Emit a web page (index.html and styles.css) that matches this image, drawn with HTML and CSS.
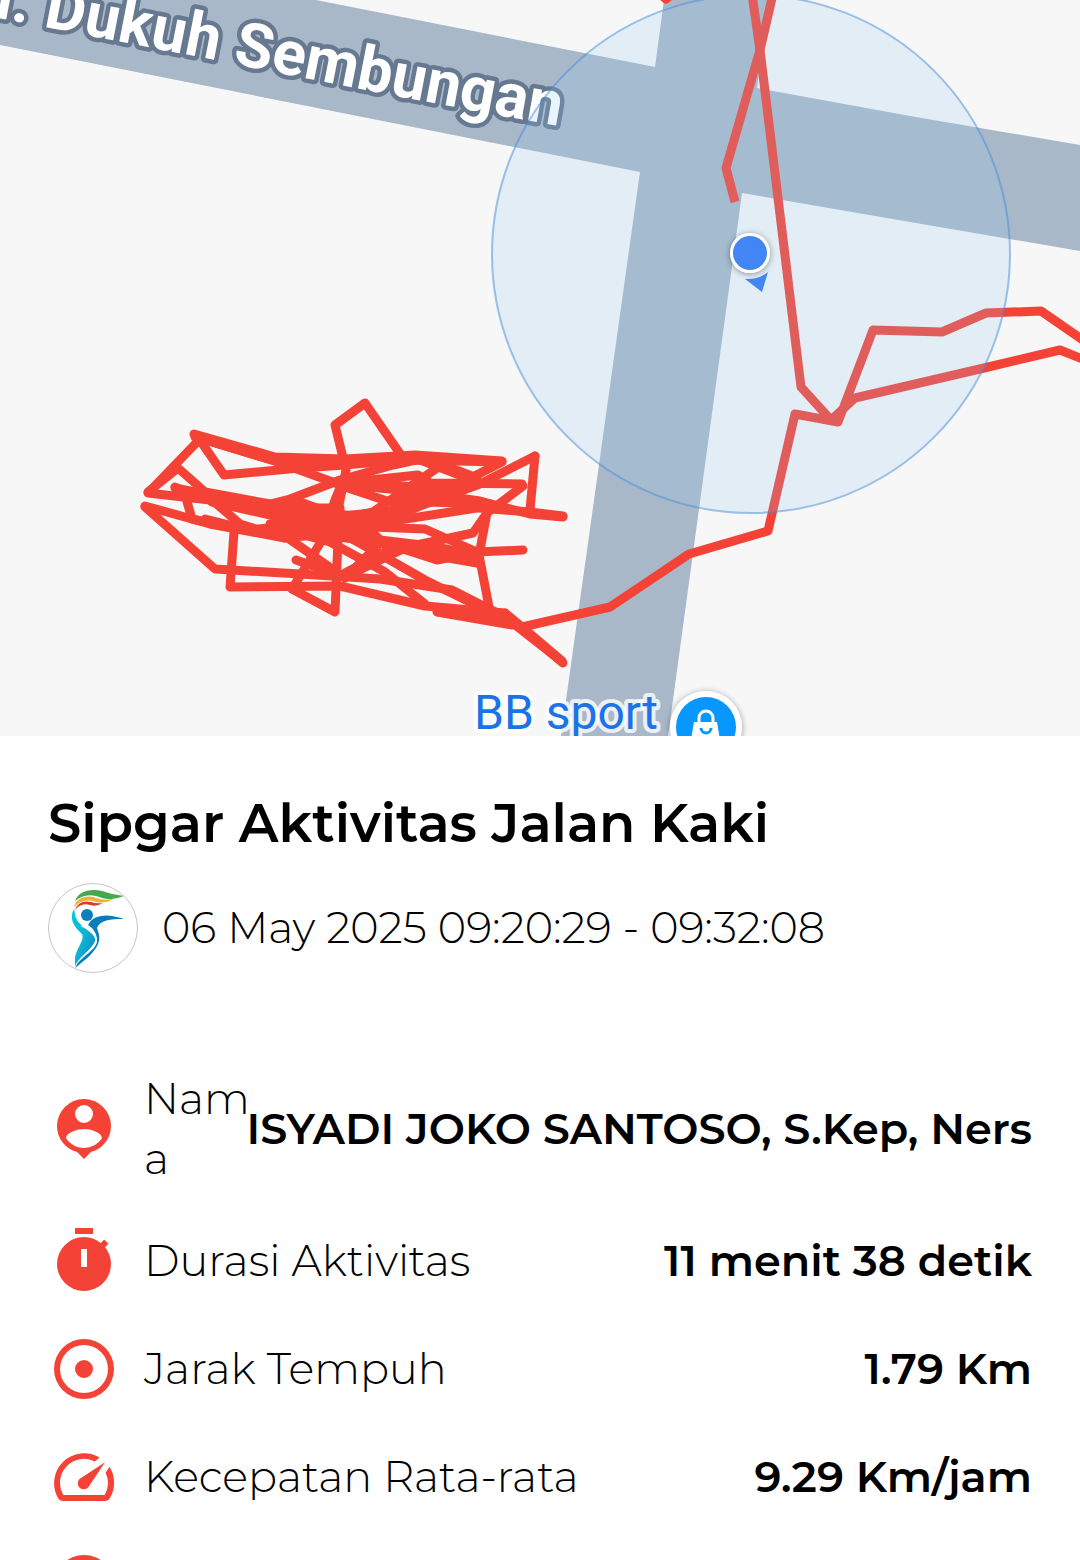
FILE: index.html
```html
<!DOCTYPE html>
<html lang="id">
<head>
<meta charset="utf-8">
<meta name="viewport" content="width=device-width, initial-scale=1">
<title>Sipgar Aktivitas Jalan Kaki</title>
<link rel="stylesheet" href="styles.css">
</head>
<body>
<main class="screen">
  <svg class="map" viewBox="0 0 1080 736" role="img" aria-label="Peta rute">
    <defs>
      <path id="street" d="M-80 3Q150 47 300 77T559 126"/>
      <filter id="soft" x="-50%" y="-50%" width="200%" height="200%"><feDropShadow dx="0" dy="1" stdDeviation="3" flood-color="#000" flood-opacity=".4"/></filter>
    </defs>
    <rect class="land" width="1080" height="736"/>
    <path class="road" d="M0-60L316 0L655 67L664 0H769L757 88L910 116L1080 145V251L910 222L742 193L673 700L668 736H561L566 700L640 172L0 45Z"/>
    <text class="street-name"><textPath href="#street" startOffset="100%" text-anchor="end">Jl. Dukuh Sembungan</textPath></text>
    <g class="route">
      <path d="M735 202L726 168L760 50L773-6"/>
      <path d="M752-6L760 50L801 387L831 420L855 398L984 368L1060 350L1090 362"/>
      <path d="M522 627L610 607L689 554L768 531L795 414L838 422L873 330L942 332L986 313L1041 311L1090 345"/>
      <path d="M660-6L666-1L672-6"/>
    </g>
    <g class="route laps">
      <path d="M194 434L275 457L345 459L415 455L502 461"/>
      <path d="M195 437L275 461L345 463L415 460L500 462"/>
      <path d="M197 436L224 475L300 468L345 465L410 459"/>
      <path d="M200 439L148 493L210 500L285 512L345 524"/>
      <path d="M148 492L178 468L205 492L270 504L340 518"/>
      <path d="M145 507L215 569L300 574L380 579L452 590L505 617L561 661"/>
      <path d="M145 506L210 524L285 538L345 526L373 524L483 507"/>
      <path d="M175 487L184 491L192 519L240 529L285 534"/>
      <path d="M175 488L285 510L345 526L425 529L477 552"/>
      <path d="M212 500L240 524L285 538L320 534L360 540"/>
      <path d="M234 532L230 587L340 586L425 606L505 613L522 627L562 661"/>
      <path d="M292 589L335 612L338 540L338 510L346 470L335 425L365 403L403 458"/>
      <path d="M296 560L345 577L407 547L473 533L487 513L523 486"/>
      <path d="M292 589L322 540L335 500L342 483L418 475L430 483L522 484"/>
      <path d="M200 438L275 461L338 484L410 491L480 501L530 514L563 517"/>
      <path d="M535 456L530 510"/>
      <path d="M535 456L480 484L420 506L373 526"/>
      <path d="M502 462L455 486L405 508L360 528L285 518"/>
      <path d="M443 464L373 512L345 518L300 502L262 509"/>
      <path d="M262 506L290 499L340 480L393 465L425 458L477 478L430 498"/>
      <path d="M430 498L480 508L530 512L563 516"/>
      <path d="M415 458L470 479L450 490L380 484L342 486"/>
      <path d="M487 513L479 555L490 612"/>
      <path d="M285 536L345 578L378 545L340 516"/>
      <path d="M285 512L330 524L300 530L270 524L340 534"/>
      <path d="M285 530L330 542L385 572L425 604"/>
      <path d="M345 535L390 560L425 580L490 612"/>
      <path d="M345 532L400 548L437 560L477 552L523 550"/>
      <path d="M400 546L437 556L477 563"/>
      <path d="M342 486L390 502L430 496L480 505"/>
      <path d="M340 516L385 512L430 502L480 504"/>
      <path d="M355 528L380 540L430 546L477 555"/>
      <path d="M360 520L385 545L430 553L475 554"/>
      <path d="M345 573L385 552L420 545"/>
      <path d="M285 508L340 508L340 530"/>
      <path d="M200 497L285 507L345 515L380 520"/>
      <path d="M212 502L275 516L345 516"/>
      <path d="M205 519L250 530L285 526L330 532"/>
      <path d="M262 508L285 518L268 530L300 536L345 534"/>
      <path d="M437 608L512 621"/>
      <path d="M437 612L512 625"/>
      <path d="M505 613L563 663"/>
    </g>
    <text class="place-name" x="474" y="729">BB sport</text>
    <circle cx="706" cy="727" r="36" fill="#fff" filter="url(#soft)"/>
    <circle cx="706" cy="727" r="30" fill="#0896ff"/>
    <path d="M694 722H717L721 746H690Z" fill="#fff"/>
    <path d="M699 723V718A7 7 0 0 1 713 718V723" fill="none" stroke="#fff" stroke-width="3"/>
    <path d="M701 728A5 5 0 0 0 711 728" fill="none" stroke="#0896ff" stroke-width="3"/>
    <circle class="accuracy" cx="751" cy="254" r="259"/>
    <circle cx="750" cy="253" r="20" fill="#fff" filter="url(#soft)"/>
    <circle cx="750" cy="253" r="17" fill="#4286f5"/>
    <path d="M745 279Q758 280 768 272L762 292Z" fill="#4286f5"/>
  </svg>

  <section class="details">
    <h1 class="title">Sipgar Aktivitas Jalan Kaki</h1>
    <div class="when">
      <svg class="logo" viewBox="0 0 90 90" aria-hidden="true">
        <defs><linearGradient id="body" x1="0" y1="0" x2="1" y2="1"><stop offset="0" stop-color="#00c8dc"/><stop offset=".5" stop-color="#10b4d4"/><stop offset="1" stop-color="#087dbc"/></linearGradient></defs>
        <circle cx="45" cy="45" r="44.5" fill="#fff" stroke="#aaa" stroke-width=".7"/>
        <path d="M27 18C30 8 43 5 54 8Q65 12 76 13Q64 18 54 15C43 10 34 12 27 18Z" fill="#48a64b"/>
        <path d="M26 24C28 15 39 11 48 15Q56 18 66 16Q57 21 48 19C39 16 32 18 26 24Z" fill="#efb22f"/>
        <path d="M27 27C29 20 36 17 43 19Q49 21 55 20Q48 24 42 22C36 20 31 22 27 27Z" fill="#dc3934"/>
        <circle cx="39" cy="32" r="6" fill="#087fbe"/>
        <path d="M26 26C21 35 25 43 34 51C37 56 29 65 27 74V84C31 75 45 65 47 58C49 49 28 44 27 31Z" fill="url(#body)"/>
        <path d="M76 36Q59 30 49 34Q43 36 40 42C44 44 49 50 49 57C50 67 31 74 27 85C33 80 46 71 50 61C53 54 50 49 49 45C52 37 62 36 76 36Z" fill="#087dbc"/>
        <path d="M33 43Q51 50 48 59C44 67 31 73 27 84" fill="none" stroke="#fff" stroke-width=".8"/>
      </svg>
      <time class="text">06 May 2025 09:20:29 - 09:32:08</time>
    </div>

    <dl class="stats">
      <div class="row">
        <svg class="icon" viewBox="0 0 24 24" aria-hidden="true"><path fill-rule="evenodd" d="M12 2a9 9 0 0 0-9 9c0 4.17 2.84 7.67 6.69 8.69L12 22l2.31-2.31C18.16 18.67 21 15.17 21 11a9 9 0 0 0-9-9zm0 2a3 3 0 1 1 0 6 3 3 0 0 1 0-6zm0 14.3c-2.5 0-4.71-1.28-6-3.22.03-1.99 4-3.08 6-3.08s5.97 1.09 6 3.08a7.2 7.2 0 0 1-6 3.22z"/></svg>
        <dt class="label">Nam<wbr>a</dt>
        <dd class="value">ISYADI JOKO SANTOSO, S.Kep, Ners</dd>
      </div>
      <div class="row">
        <svg class="icon" viewBox="0 0 24 24" aria-hidden="true"><path fill-rule="evenodd" d="M9 1h6v2H9zM12 4a9 9 0 0 0 0 18 9 9 0 0 0 7.03-14.61l1.12-1.12-1.42-1.42-1.15 1.15A9 9 0 0 0 12 4zM11 8h2v6h-2z"/></svg>
        <dt class="label">Durasi Aktivitas</dt>
        <dd class="value">11 menit 38 detik</dd>
      </div>
      <div class="row">
        <svg class="icon" viewBox="0 0 24 24" aria-hidden="true"><path fill-rule="evenodd" d="M12 2a10 10 0 1 0 0 20 10 10 0 0 0 0-20zm0 2a8 8 0 1 1 0 16 8 8 0 0 1 0-16zm0 5a3 3 0 1 0 0 6 3 3 0 0 0 0-6z"/></svg>
        <dt class="label">Jarak Tempuh</dt>
        <dd class="value">1.79 Km</dd>
      </div>
      <div class="row">
        <svg class="icon" viewBox="0 0 24 24" aria-hidden="true"><path d="M17.2 5.5A10 10 0 0 0 3.34 19c.36.65.96 1 1.7 1h13.92c.74 0 1.34-.35 1.7-1A10 10 0 0 0 20.5 8.6l-1.3 2A8 8 0 0 1 18.9 18H5.1A8 8 0 0 1 15.6 6.8zM19 7.1l-8.5 5.6a2 2 0 1 0 2.9 2.8z"/></svg>
        <dt class="label">Kecepatan Rata-rata</dt>
        <dd class="value">9.29 Km/jam</dd>
      </div>
      <div class="row">
        <svg class="icon" viewBox="0 0 24 24" aria-hidden="true"><circle cx="12" cy="12" r="10"/></svg>
      </div>
    </dl>
  </section>
</main>
</body>
</html>
```
FILE: styles.css
```css
* { box-sizing: border-box; }

body {
  margin: 0;
  background: #fff;
  color: #000;
  font-family: Montserrat, Inter, sans-serif;
}

.screen {
  height: 100vh;
  overflow: hidden;
}

.map {
  display: block;
  width: 100%;
  height: auto;
}

.land { fill: #f7f7f7; }
.road { fill: #a9b8c9; }

.street-name {
  font: 700 62px Roboto, sans-serif;
  fill: #fff;
  stroke: #667990;
  stroke-width: 9px;
  stroke-linejoin: round;
  paint-order: stroke;
}

.place-name {
  font: 400 48px Roboto, sans-serif;
  fill: #1a73e8;
  stroke: rgba(255, 255, 255, 0.8);
  stroke-width: 8px;
  stroke-linejoin: round;
  paint-order: stroke;
}

.route {
  fill: none;
  stroke: #f44336;
  stroke-width: 9px;
  stroke-linejoin: round;
}

.laps { stroke-linecap: round; }

.accuracy {
  fill: rgba(147, 201, 238, 0.2);
  stroke: rgba(70, 140, 220, 0.5);
  stroke-width: 2px;
}

.details { padding: 55px 48px 0; }

.title {
  margin: 0;
  font-size: 53px;
  font-weight: 600;
  line-height: 64px;
}

.when {
  display: flex;
  align-items: center;
  gap: 24px;
  margin-top: 28px;
}

.logo {
  flex: none;
  width: 90px;
  height: 90px;
}

.text,
.label,
.value {
  font-size: 43px;
  line-height: 60px;
}

.text,
.label { font-weight: 300; }

.stats {
  display: flex;
  flex-direction: column;
  gap: 36px;
  margin: 96px 0 0;
}

.row {
  display: flex;
  align-items: center;
}

.icon {
  flex: none;
  width: 72px;
  height: 72px;
  margin-right: 24px;
  fill: #f44336;
}

.label {
  flex: 1;
  min-width: 0;
}

.value {
  margin: 0;
  font-weight: 600;
  white-space: nowrap;
}
```
